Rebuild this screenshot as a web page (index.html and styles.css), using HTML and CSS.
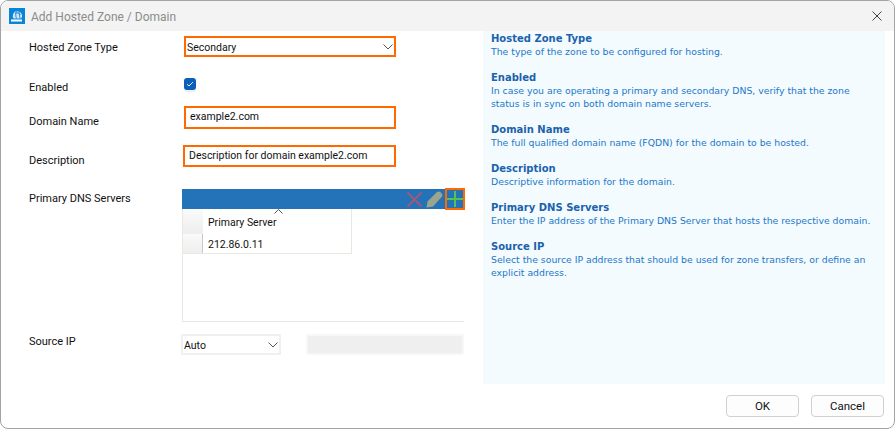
FILE: index.html
```html
<!DOCTYPE html>
<html lang="en">
<head>
<meta charset="utf-8">
<title>Add Hosted Zone / Domain</title>
<link rel="stylesheet" href="styles.css">
</head>
<body>
<div class="window">
  <header class="titlebar">
    <svg class="app-icon" width="16" height="16" viewBox="0 0 16 16"><rect width="16" height="16" fill="#0a84d6"/><path d="M2 11.500h11v2H2z" fill="#fff"/><path d="M4.500 10.500a5 5 0 0 1 2-7 5 5 0 0 1 6.500 3.500c.4 1.500-.3 2.800-1 3.500z" fill="#cfe8f8"/><path d="M6 5.500c2-1.200 4-.8 5.500 1M7.500 3.500c-1 2-1 4.500 0 7M10 3.500l1 7" fill="none" stroke="#0a84d6" stroke-width=".9"/></svg>
    <span class="title">Add Hosted Zone / Domain</span>
    <svg class="close" width="10" height="10" viewBox="0 0 10 10"><path d="M.5.500l9 9M9.500.500l-9 9" fill="none" stroke="#444" stroke-width="1"/></svg>
  </header>
  <div class="content">
    <main class="form">
      <div class="row row-type">
        <label class="label">Hosted Zone Type</label>
        <div class="field hl select-field">
          <span class="value">Secondary</span>
          <svg class="chev" width="10" height="6" viewBox="0 0 10 6"><path d="M.5.500l4.500 4.500 4.500-4.500" fill="none" stroke="#555" stroke-width="1"/></svg>
        </div>
      </div>
      <div class="row row-enabled">
        <label class="label">Enabled</label>
        <span class="checkbox"><svg width="8" height="6" viewBox="0 0 8 6"><path d="M1 3.200l2 1.800 4-4" fill="none" stroke="#dbe9f7" stroke-width="1"/></svg></span>
      </div>
      <div class="row row-domain">
        <label class="label">Domain Name</label>
        <div class="field hl input-field">example2.com</div>
      </div>
      <div class="row row-desc">
        <label class="label">Description</label>
        <div class="field hl input-field wide">Description for domain example2.com</div>
      </div>
      <div class="row row-dns">
        <label class="label">Primary DNS Servers</label>
        <div class="grid-box">
          <div class="toolbar">
            <svg class="tool tool-x" width="17" height="17" viewBox="0 0 17 17"><path d="M1.500 1.500l14 14M15.500 1.500l-14 14" fill="none" stroke="#a0587a" stroke-width="2"/></svg>
            <svg class="tool" width="17" height="17" viewBox="0 0 17 17"><path d="M.5 16.500l1-6L11 1c1-.9 2.500-.7 4 .8s1.700 3 .8 4L7 15.500z" fill="#9aa58c"/></svg>
            <span class="add"><svg width="16" height="16" viewBox="0 0 16 16"><path d="M8 0v16M0 8h16" fill="none" stroke="#55c255" stroke-width="2"/></svg></span>
          </div>
          <div class="table">
            <div class="thead">
              <span class="corner"></span><span class="col">Primary Server</span>
              <svg class="sort" width="9" height="5" viewBox="0 0 9 5"><path d="M.5 4.500l4-4 4 4" fill="none" stroke="#555" stroke-width="1"/></svg>
            </div>
            <div class="trow"><span class="rowhead"></span><span class="col">212.86.0.11</span></div>
          </div>
        </div>
      </div>
      <div class="row row-source">
        <label class="label">Source IP</label>
        <div class="field source-select">
          <span class="value">Auto</span>
          <svg class="chev" width="10" height="6" viewBox="0 0 10 6"><path d="M.5.500l4.500 4.500 4.500-4.500" fill="none" stroke="#555" stroke-width="1"/></svg>
        </div>
        <div class="disabled-input"></div>
      </div>
    </main>
    <aside class="help">
      <section class="topic"><h3>Hosted Zone Type</h3><p>The type of the zone to be configured for hosting.</p></section>
      <section class="topic"><h3>Enabled</h3><p>In case you are operating a primary and secondary DNS, verify that the zone status is in sync on both domain name servers.</p></section>
      <section class="topic"><h3>Domain Name</h3><p>The full qualified domain name (FQDN) for the domain to be hosted.</p></section>
      <section class="topic"><h3>Description</h3><p>Descriptive information for the domain.</p></section>
      <section class="topic"><h3>Primary DNS Servers</h3><p>Enter the IP address of the Primary DNS Server that hosts the respective domain.</p></section>
      <section class="topic"><h3>Source IP</h3><p>Select the source IP address that should be used for zone transfers, or define an explicit address.</p></section>
    </aside>
  </div>
  <footer class="footer">
    <button class="btn">OK</button>
    <button class="btn">Cancel</button>
  </footer>
</div>
</body>
</html>
```
FILE: styles.css
```css
* { box-sizing: border-box; }
html, body { margin: 0; padding: 0; background: #fff; }
body { width: 895px; height: 429px; overflow: hidden; font-family: Roboto, "Open Sans", sans-serif; font-size: 11px; color: #111; }
.window { width: 895px; height: 429px; border: 1px solid #a3a3a3; border-radius: 8px; background: #fff; display: flex; flex-direction: column; overflow: hidden; }
.titlebar { height: 30px; flex: none; background: #f3f3f3; display: flex; align-items: center; padding: 0 12px 0 8px; }
.app-icon { flex: none; }
.title { margin-left: 6px; padding-top: 2px; font-size: 12px; color: #8c8c8c; flex: 1; }
.content { flex: none; height: 353px; display: flex; }
.form { width: 482px; flex: none; padding: 5px 0 0 28px; display: flex; flex-direction: column; }
.row { display: flex; position: relative; }
.label { width: 155px; flex: none; }
.row-type { height: 21px; }
.row-type .label { padding-top: 5px; }
.field { background: #fff; display: flex; align-items: center; font-size: 10.5px; }
.hl { border: 2.5px solid #ff6a00; width: 212px; }
.select-field { height: 21px; padding: 1px 1px 0 1px; justify-content: space-between; }
.value { font-size: 10.5px; }
.row-enabled { height: 12px; margin-top: 21px; }
.row-enabled .label { padding-top: 3px; }
.checkbox { width: 12px; height: 12px; border-radius: 3px; background: #0b5fb8; display: flex; align-items: center; justify-content: center; box-shadow: 0 2px 0 #eee; }
.row-domain { height: 23px; margin-top: 16px; }
.row-domain .label { padding-top: 9px; }
.input-field { height: 23px; padding: 0 0 3px 4px; }
.row-desc { height: 22px; margin-top: 16px; }
.row-desc .label { padding-top: 9px; }
.wide { width: 213px; height: 22px; margin-left: -1px; padding: 0 0 2px 4px; }
.row-dns { height: 132px; margin-top: 22px; }
.row-dns .label { padding-top: 3px; width: 153px; }
.grid-box { width: 282px; height: 133px; border-left: 1px solid #e9e9e1; border-bottom: 1px solid #e9e9e1; font-size: 10.5px; }
.toolbar { height: 20px; margin-left: -1px; background: #2473b8; display: flex; justify-content: flex-end; align-items: center; gap: 2px; }
.tool-x { margin-right: 1px; }
.add { width: 20px; height: 22px; margin-right: -1px; border: 2.5px solid #ff6a00; display: flex; align-items: center; justify-content: center; background: #2473b8; }
.table { width: 169px; border-right: 1px solid #e9e9e1; border-bottom: 1px solid #e9e9e1; }
.thead { height: 25px; display: flex; align-items: center; position: relative; }
.sort { position: absolute; left: 91px; top: 0; }
.trow { height: 19px; display: flex; align-items: center; }
.corner { width: 20px; height: 100%; background: linear-gradient(#fafafa, #eee); flex: none; }
.rowhead { width: 20px; height: 100%; background: linear-gradient(#fafafa, #eee); border-right: 1px solid #c8c8c8; flex: none; }
.col { padding: 2px 0 0 5px; }
.row-source { height: 21px; margin-top: 13px; }
.row-source .label { width: 152px; padding-top: 1px; }
.source-select { width: 100px; height: 21px; border: 2px solid #f0f0f0; padding: 1px 1px 0 1px; justify-content: space-between; }
.disabled-input { width: 158px; height: 21px; margin-left: 25px; background: #efefef; border: 2px solid #f7f7f7; border-radius: 2px; }
.help { width: 402px; flex: none; background: #f3fbff; padding: 1px 0 0 8px; font-family: "DejaVu Sans", Verdana, sans-serif; color: #1d78c8; font-size: 9.3px; line-height: 13px; }
.topic { margin-bottom: 13px; }
.topic h3 { margin: 0; font-size: 10px; line-height: 13px; font-weight: bold; color: #1c62ac; }
.topic p { margin: 0; width: 385px; }
.footer { flex: 1; display: flex; justify-content: flex-end; gap: 12px; padding: 11px 10px 0 0; }
.btn { width: 73px; height: 22px; background: #fdfdfd; border: 1px solid #d0d0d0; border-radius: 4px; font-family: inherit; font-size: 11.5px; color: #111; padding: 0; }
```
